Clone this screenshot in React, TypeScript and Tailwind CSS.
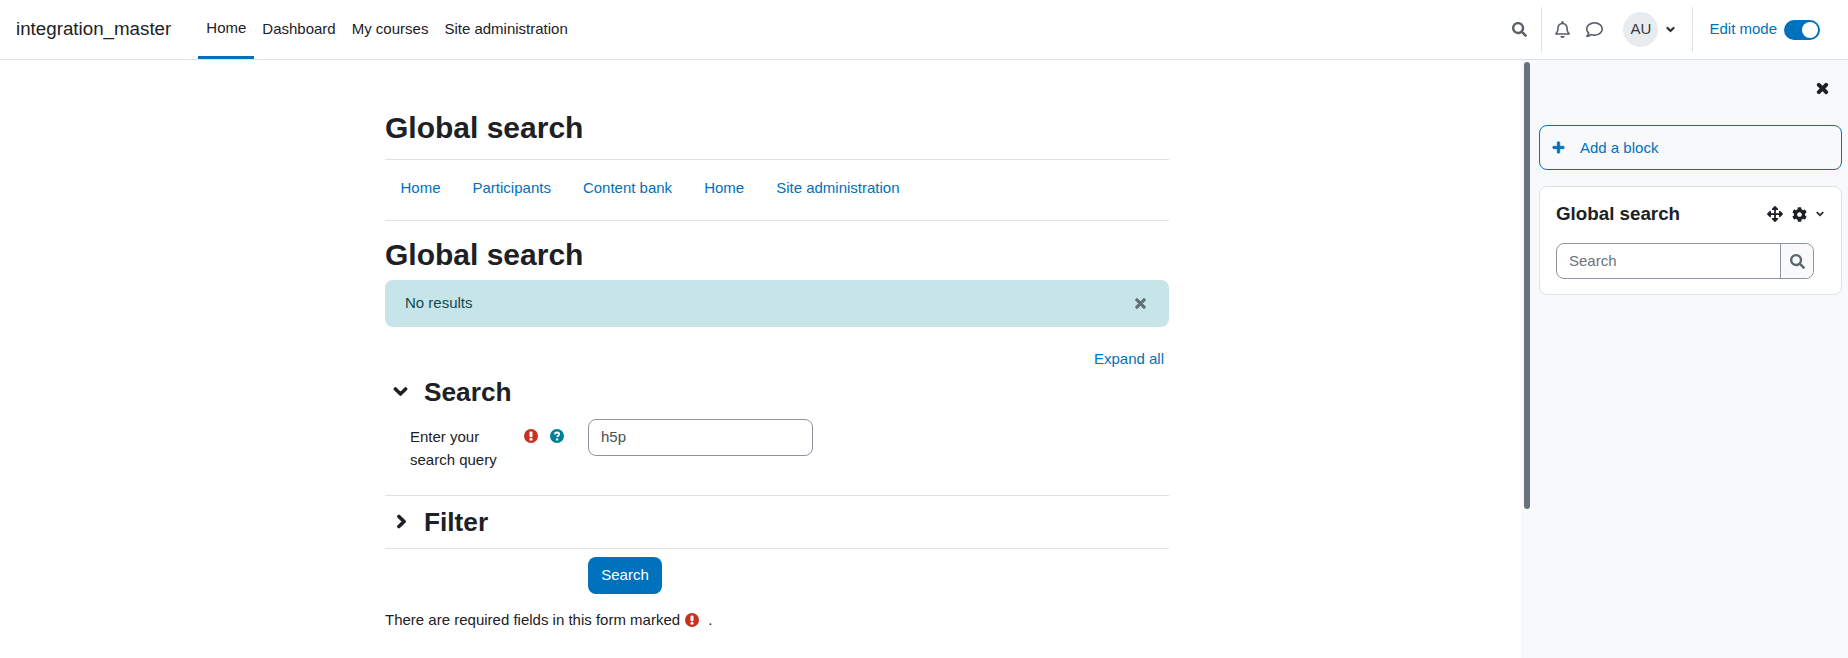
import React from "react";
import { FaSearch, FaRegBell, FaRegComment, FaChevronDown, FaChevronRight, FaTimes, FaPlus, FaArrowsAlt, FaCog } from "react-icons/fa";

const Required = () => (
  <svg width="14" height="14" viewBox="0 0 14 14" className="shrink-0">
    <circle cx="7" cy="7" r="7" fill="#ca3120" />
    <rect x="5.5" y="2.6" width="3" height="5.6" rx="1" fill="#fff" />
    <circle cx="7" cy="10.2" r="1.5" fill="#fff" />
  </svg>
);

const Help = () => (
  <svg width="14" height="14" viewBox="0 0 14 14" className="shrink-0">
    <circle cx="7" cy="7" r="7" fill="#008196" />
    <path d="M4.8 5.4C4.9 4.2 5.8 3.5 7 3.5C8.3 3.5 9.2 4.3 9.2 5.3C9.2 6.7 7.2 6.7 7.2 8.1" fill="none" stroke="#fff" strokeWidth="1.8" />
    <circle cx="7.1" cy="10.4" r="1.2" fill="#fff" />
  </svg>
);

export default function App() {
  return (
    <div className="flex h-[658px] w-[1848px] flex-col overflow-hidden bg-white font-['Liberation_Sans',Arial,sans-serif] text-[15px] leading-[22.5px] text-[#1d2125]">
      <header className="flex h-[60px] shrink-0 items-stretch border-b border-[#dee2e6] bg-white">
        <span className="ml-4 self-center pb-[2px] text-[18.75px] leading-[28px]">integration_master</span>
        <nav className="ml-[23px] flex items-stretch">
          <a className="ml-[4px] flex items-center border-b-[3px] border-[#0071bc] px-2 pb-[3px] pt-[3px]">Home</a>
          <a className="flex items-center px-2 pb-[3px] pt-[3px]">Dashboard</a>
          <a className="flex items-center px-2 pb-[3px] pt-[3px]">My courses</a>
          <a className="flex items-center px-2 pb-[3px] pt-[3px]">Site administration</a>
        </nav>
        <div className="ml-auto flex items-center">
          <FaSearch className="text-[15px] text-[#5a6168]" />
          <div className="ml-[14px] h-[45px] w-px bg-[#dee2e6]" />
          <FaRegBell className="ml-[12px] text-[17px] text-[#5a6168]" />
          <FaRegComment className="ml-[15px] text-[17px] text-[#5a6168]" />
          <div className="ml-[20px] flex h-[35px] w-[35px] items-center justify-center rounded-full bg-[#e9ecef] text-[#343a40]">AU</div>
          <FaChevronDown className="ml-2 stroke-[50] text-[9px] text-[#1d2125]" />
          <div className="ml-[17px] h-[45px] w-px bg-[#dee2e6]" />
          <span className="ml-[16px] text-[#0071bc]">Edit mode</span>
          <div className="ml-[7px] mr-7 flex h-5 w-[36px] items-center justify-end rounded-full bg-[#0071bc] pr-[2px]">
            <div className="h-4 w-4 rounded-full bg-white" />
          </div>
        </div>
      </header>
      <div className="flex min-h-0 flex-1">
        <main className="flex-1 overflow-hidden bg-white">
          <div className="ml-[385px] w-[784px]">
            <h1 className="mt-[51px] text-[30px] font-bold leading-[34px]">Global search</h1>
            <div className="mt-[14px] border-y border-[#dee2e6] pb-[18px] pt-[14px]">
              <div className="flex h-[28px] items-center gap-[32px] pl-[15.5px] text-[#0071bc]">
                <a>Home</a><a>Participants</a><a>Content bank</a><a>Home</a><a>Site administration</a>
              </div>
            </div>
            <h2 className="mt-[17px] text-[30px] font-bold leading-[34px]">Global search</h2>
            <div className="mt-[8px] flex h-[47px] items-center justify-between rounded-lg bg-[#c7e5e9] pl-[20px] pr-[21px] text-[#0f4a52]">
              <span>No results</span>
              <FaTimes className="stroke-[20] text-[15px] text-[#5f7275]" />
            </div>
            <div className="mt-[21px] pr-[5px] text-right text-[#0071bc]">Expand all</div>
            <div className="mt-[4px] flex h-[34px] items-center">
              <FaChevronDown className="ml-2 stroke-[40] text-[15px]" />
              <h3 className="ml-[16px] text-[26.25px] font-bold leading-[34px]">Search</h3>
            </div>
            <div className="mt-[10px] flex items-start border-b border-[#dee2e6] pb-[23px]">
              <label className="ml-[25px] mt-[6px] w-[114px] leading-[23.5px]">Enter your<br />search query</label>
              <div className="mt-[10px] flex items-center gap-[12px]"><Required /><Help /></div>
              <div className="ml-[24px] flex h-[37px] w-[225px] items-center rounded-lg border border-[#8f959e] px-3 text-[#495057]">h5p</div>
            </div>
            <div className="flex h-[53px] items-center border-b border-[#dee2e6]">
              <FaChevronRight className="ml-[9px] stroke-[40] text-[15px]" />
              <h3 className="ml-[15px] text-[26.25px] font-bold leading-[34px]">Filter</h3>
            </div>
            <button className="ml-[203px] mt-[8px] block h-[37px] w-[74px] rounded-lg bg-[#0071bc] text-center text-white">Search</button>
            <div className="mt-[15px] flex items-center">
              There are required fields in this form marked <span className="ml-[5px]"><Required /></span><span className="ml-[9px]">.</span>
            </div>
          </div>
        </main>
        <aside className="relative w-[327px] shrink-0 bg-[#f8f9fa] pl-[18px] pr-[6px]">
          <div className="absolute left-[3px] top-[2px] h-[447px] w-[6px] rounded-full bg-[#6a737b]" />
          <div className="flex h-[65px] items-start justify-end pr-[12px] pt-[21px]">
            <FaTimes className="stroke-[40] text-[15px] text-[#1d2125]" />
          </div>
          <div className="flex h-[45px] items-center rounded-lg border border-[#0071bc] pl-[12px] text-[#0071bc]">
            <FaPlus className="stroke-[30] text-[13px]" />
            <span className="ml-[15px] translate-y-[1px]">Add a block</span>
          </div>
          <section className="mt-4 h-[109px] rounded-lg border border-[#dee2e6] bg-white px-4 pt-[11px]">
            <div className="flex h-[32px] items-center justify-between pr-[1px]">
              <h5 className="text-[18.75px] font-bold leading-[28px]">Global search</h5>
              <div className="flex items-center">
                <FaArrowsAlt className="text-[16px]" />
                <FaCog className="ml-[9px] text-[15px]" />
                <FaChevronDown className="ml-[9px] stroke-[40] text-[8px]" />
              </div>
            </div>
            <div className="mt-[13px] flex h-[36px] w-[258px] rounded-lg border border-[#8f959e]">
              <div className="flex flex-1 items-center px-[12px] text-[#6a737b]">Search</div>
              <div className="flex w-[33px] items-center justify-center rounded-r-lg border-l border-[#8f959e] bg-[#f8f9fa]">
                <FaSearch className="text-[15px] text-[#5a6a75]" />
              </div>
            </div>
          </section>
        </aside>
      </div>
    </div>
  );
}
